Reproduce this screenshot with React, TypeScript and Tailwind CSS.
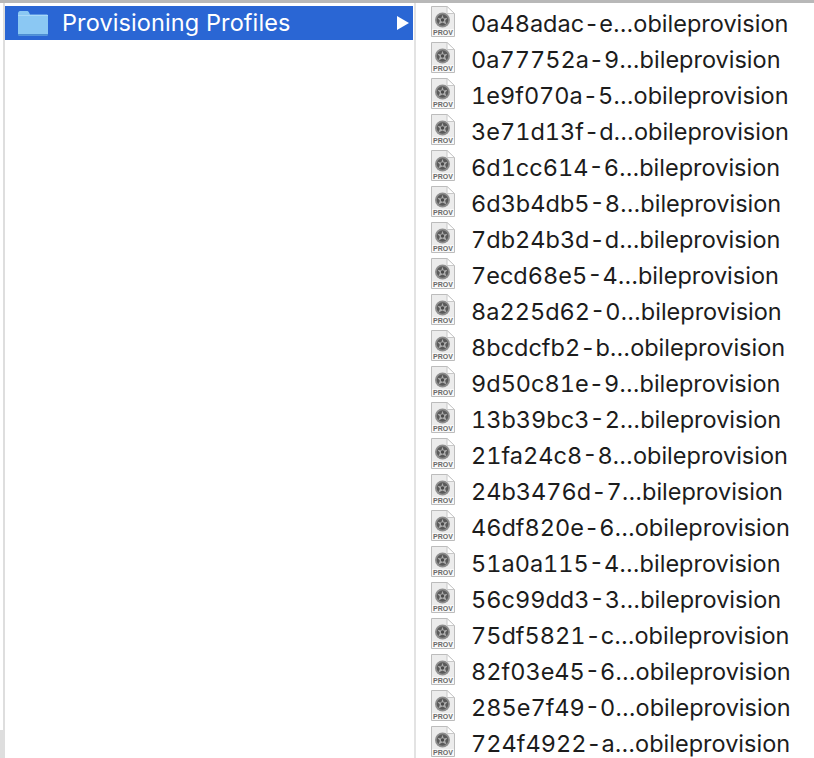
const files = [
  "0a48adac-e…obileprovision",
  "0a77752a-9…bileprovision",
  "1e9f070a-5…obileprovision",
  "3e71d13f-d…obileprovision",
  "6d1cc614-6…bileprovision",
  "6d3b4db5-8…bileprovision",
  "7db24b3d-d…bileprovision",
  "7ecd68e5-4…bileprovision",
  "8a225d62-0…bileprovision",
  "8bcdcfb2-b…obileprovision",
  "9d50c81e-9…bileprovision",
  "13b39bc3-2…bileprovision",
  "21fa24c8-8…obileprovision",
  "24b3476d-7…bileprovision",
  "46df820e-6…obileprovision",
  "51a0a115-4…bileprovision",
  "56c99dd3-3…bileprovision",
  "75df5821-c…obileprovision",
  "82f03e45-6…obileprovision",
  "285e7f49-0…obileprovision",
  "724f4922-a…obileprovision",
];

const FolderIcon = () => (
  <svg width="30" height="25" viewBox="0 0 30 25" className="shrink-0">
    <path d="M0 2.500C0 1 1 0 2 0h7c1 0 1.500.5 2 1.500L12 3.500h16.500c1 0 1.500.7 1.500 1.500V23c0 1-.7 1.500-1.500 1.500h-27C.6 24.500 0 24 0 23z" fill="#8bc8f3" />
    <path d="M0 4h30v1H0z" fill="#a9d8f7" />
    <path d="M0 23h30v.5c0 .6-.6 1-1.500 1h-27C.6 24.500 0 24.100 0 23.500z" fill="#4d8ed2" />
  </svg>
);

const ProvIcon = () => (
  <svg width="24" height="31" viewBox="0 0 24 31" className="mb-[5px] shrink-0">
    <path d="M.5 .5H16l7.500 7V30.500H.5z" fill="#ececec" stroke="#bcbcbc" />
    <path d="M16 .5V7.500H23.500z" fill="#fff" stroke="#c8c8c8" />
    <circle cx="11.500" cy="14" r="7.500" fill="#8e8e8e" />
    <circle cx="11.500" cy="14" r="5.800" fill="#5a5a5a" />
    <path d="M11.500 8.800l1.300 3.600 3.800-.6-2.500 3 1.500 3.600-4.100-1.900-4.100 1.900 1.500-3.600-2.500-3 3.800.6z" fill="#adadad" />
    <circle cx="11.500" cy="14" r="1.700" fill="#4a4a4a" />
    <rect x="1" y="23" width="22" height="7" fill="#f8f8f8" />
    <text x="12" y="29.200" textAnchor="middle" fontSize="7" fontWeight="700" fill="#6a6a6a" fontFamily="'Liberation Sans', sans-serif">PROV</text>
  </svg>
);

export default function App() {
  return (
    <div className="h-[758px] w-[814px] overflow-hidden bg-white font-['Inter',sans-serif]">
      <div className="h-[3px] bg-[#b8b8b8]" />
      <div className="flex h-[755px]">
        <div className="flex h-full w-[5px] flex-col">
          <div className="flex flex-1 pl-[3px]">
            <div className="flex-1 bg-[#dedede]" />
          </div>
          <div className="h-[28px] bg-[#dedede]" />
        </div>
        <div className="h-full w-[409px] pt-[3px]">
          <div className="flex h-[34px] w-[408px] items-center bg-[#2a66d4] pl-[13px] pr-[4px] text-white">
            <FolderIcon />
            <span className="ml-[14px] text-[23.500px] leading-none tracking-[0.1px]">Provisioning Profiles</span>
            <span className="ml-auto h-0 w-0 border-y-[7px] border-l-[12px] border-y-transparent border-l-white" />
          </div>
        </div>
        <div className="h-full w-[2px] bg-[#e3e3e3]" />
        <div className="flex-1 overflow-hidden pl-[15px] pt-[3px]">
          {files.map((name) => (
            <div key={name} className="flex h-[36px] items-center">
              <ProvIcon />
              <span className="ml-[16px] whitespace-nowrap text-[23.500px] leading-none text-[#1c1c1c] tabular-nums">{name}</span>
            </div>
          ))}
        </div>
      </div>
    </div>
  );
}
